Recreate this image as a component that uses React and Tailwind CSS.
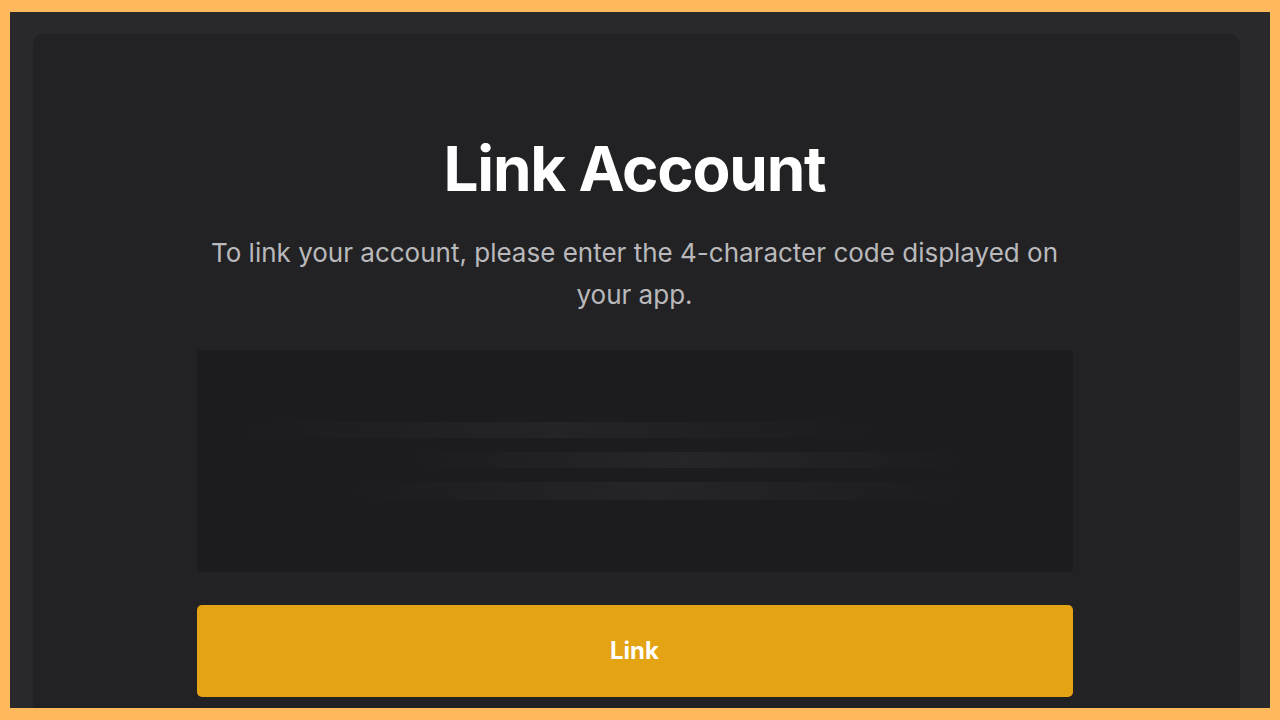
import React, { useState } from 'react';

export default function App() {
  const [code, setCode] = useState('');

  return (
    <div className="w-[1280px] h-[720px] bg-[#fdb95b] pt-[12px] pl-[10px] pr-[10px] pb-[12px]" style={{ fontFamily: 'Inter, "Liberation Sans", sans-serif' }}>
      <div className="w-full h-full bg-[#29292b] pt-[22px] pl-[23px] pr-[30px] flex flex-col">
        <div className="flex-1 bg-[#222225] rounded-t-[10px] flex flex-col items-center pt-[99px]">
          <h1 className="text-[62px] leading-[72px] font-bold tracking-[-0.02em] text-white -ml-[4px]">Link Account</h1>
          <p className="mt-[27px] w-[870px] text-center text-[26px] leading-[42px] text-[#b9b9bb] -ml-[4px]">
            To link your account, please enter the 4-character code displayed on your app.
          </p>

          <div className="mt-[34px] w-[876px] h-[222px] bg-[#1c1c1f] rounded-[3px] flex flex-col justify-center gap-[14px] px-[40px] -ml-[4px] overflow-hidden">
            <div className="w-[640px] h-[16px] bg-gradient-to-r from-transparent via-[#242428] to-transparent rounded-full" />
            <div className="w-[560px] h-[16px] ml-[170px] bg-gradient-to-r from-transparent via-[#26262a] to-transparent rounded-full" />
            <div className="w-[620px] h-[18px] ml-[110px] bg-gradient-to-r from-transparent via-[#252529] to-transparent rounded-full" />
            <input
              value={code}
              onChange={e => setCode(e.target.value)}
              maxLength={4}
              className="sr-only"
            />
          </div>

          <button className="mt-[33px] w-[876px] h-[92px] bg-[#e4a312] rounded-[5px] text-white font-bold text-[24px] -ml-[4px]">
            Link
          </button>
        </div>
      </div>
    </div>
  );
}
